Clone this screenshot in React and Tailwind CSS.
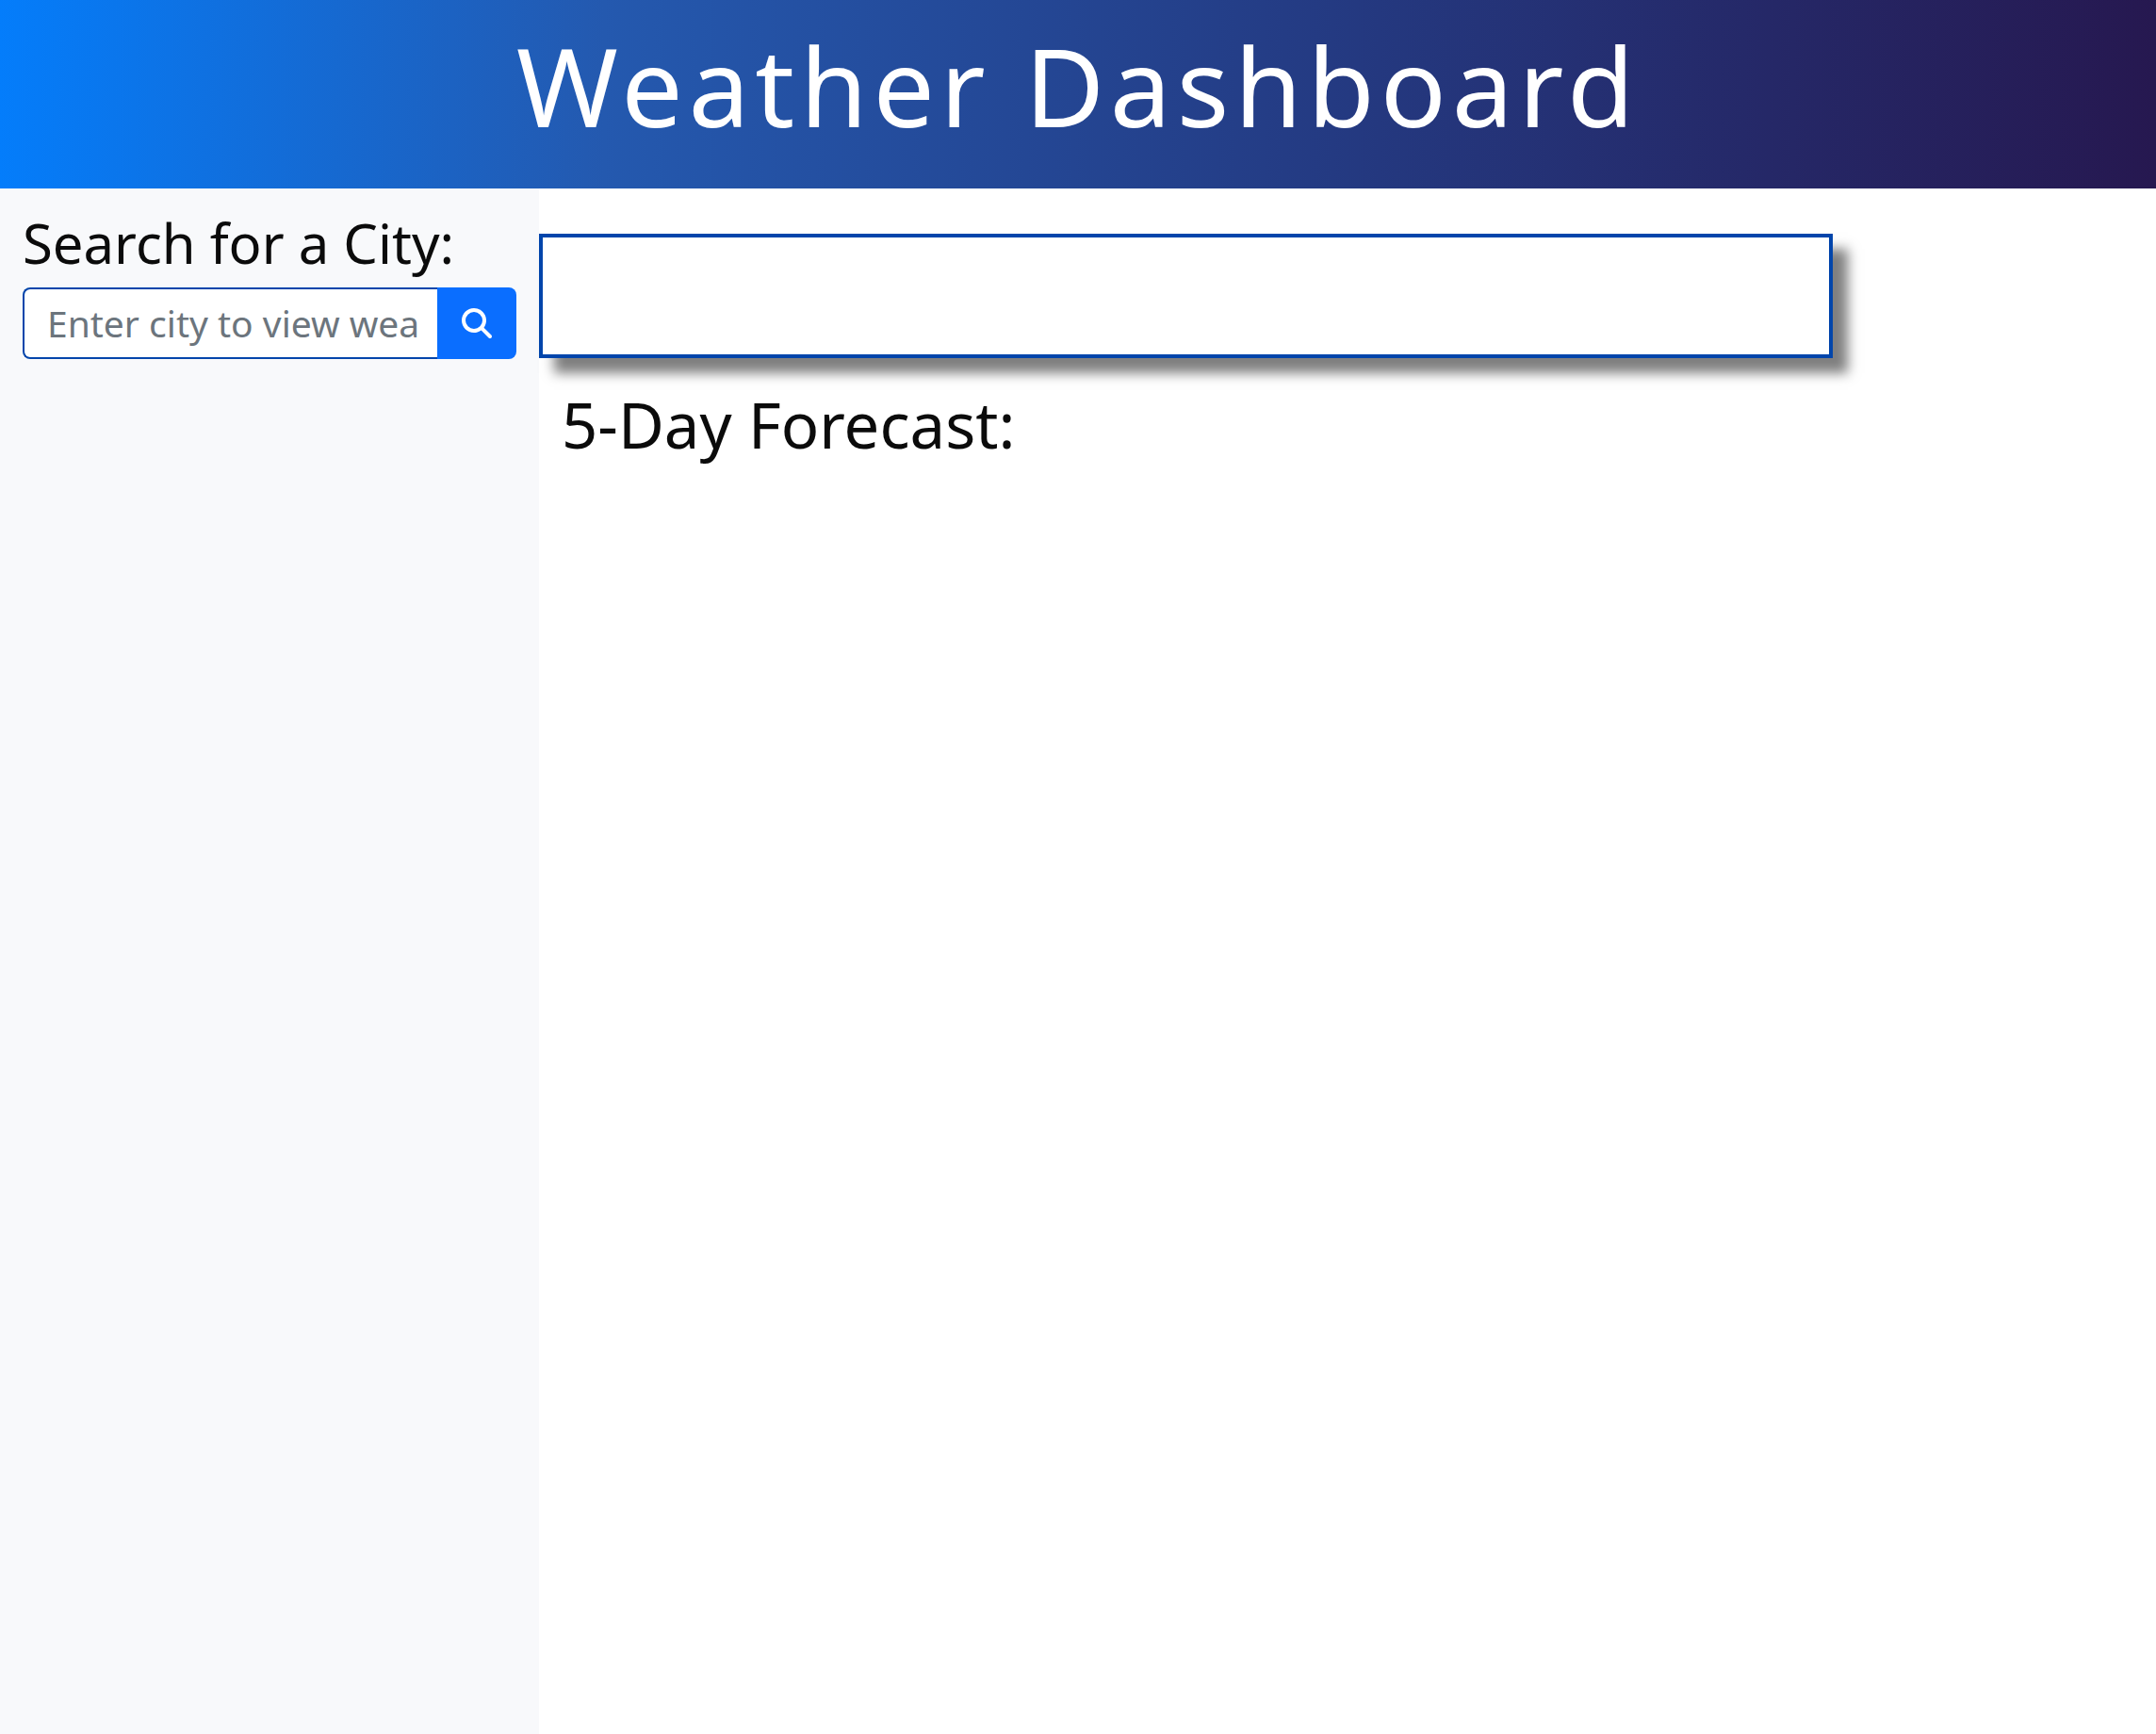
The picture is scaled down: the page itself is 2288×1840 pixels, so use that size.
export default function App() {
  return (
    <div className="flex min-h-screen flex-col bg-white font-['Noto_Sans','Noto_Sans_CJK_JP',sans-serif] text-[#0b0b0b]">
      <header className="bg-[linear-gradient(90deg,#047dfb_0%,#2459af_28%,#24387f_64%,#261850_100%)] pt-[18px] pb-[38px]">
        <h1 className="text-center text-[116px] leading-[144px] tracking-wider text-white">
          Weather Dashboard
        </h1>
      </header>

      <div className="flex grow">
        <aside className="w-1/4 bg-[#f8f9fb] px-6 pt-6">
          <form onSubmit={(e) => e.preventDefault()}>
            <label htmlFor="city" className="mb-[13px] block text-[58px] leading-[68px] whitespace-nowrap">
              Search for a City:
            </label>
            <div className="flex h-[76px]">
              <input
                id="city"
                type="text"
                placeholder="Enter city to view weather"
                className="min-w-0 grow rounded-l-lg border-2 border-r-0 border-[#0145ab] bg-white pr-5 pl-6 text-[39px] outline-none placeholder:text-[#6c757d]"
              />
              <button
                type="submit"
                aria-label="Search"
                className="flex w-[84px] shrink-0 items-center justify-center rounded-r-lg bg-[#0a6eff] text-white"
              >
                <svg viewBox="0 0 512 512" className="size-8" fill="currentColor" aria-hidden="true">
                  <path d="M416 208c0 45.900-14.900 88.300-40 122.700L502.600 457.400c12.500 12.500 12.500 32.800 0 45.300s-32.800 12.500-45.300 0L330.700 376c-34.400 25.200-76.800 40-122.700 40C93.100 416 0 322.900 0 208S93.100 0 208 0S416 93.100 416 208zM208 352a144 144 0 1 0 0-288 144 144 0 1 0 0 288z" />
                </svg>
              </button>
            </div>
          </form>
        </aside>

        <main className="w-3/4 pt-12">
          <section
            aria-label="Current weather"
            className="h-[132px] w-4/5 border-4 border-[#0145ab] bg-white shadow-[16px_16px_12px_rgba(0,0,0,0.5)]"
          />
          <h2 className="mt-8 px-6 text-[67px] leading-[76px]">5-Day Forecast:</h2>
        </main>
      </div>
    </div>
  );
}
